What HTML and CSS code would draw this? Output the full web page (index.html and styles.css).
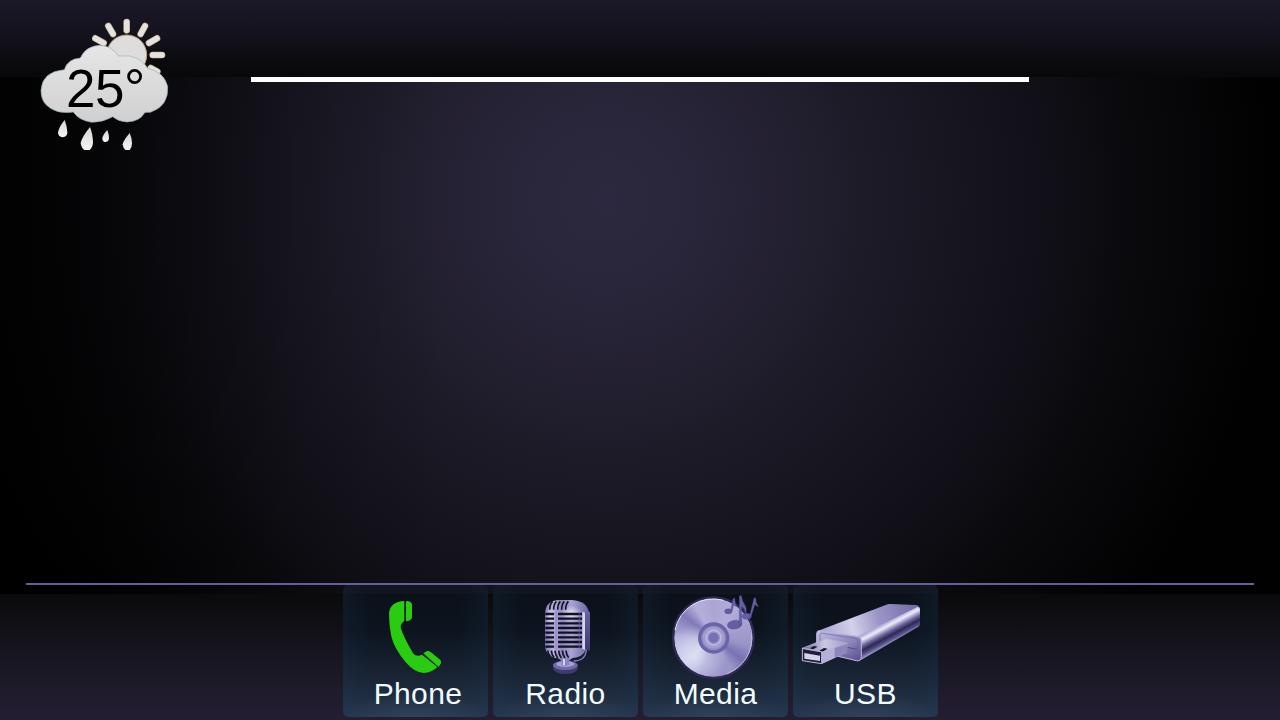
FILE: index.html
```html
<!DOCTYPE html>
<html lang="en">
<head>
<meta charset="utf-8">
<title>Car Console</title>
<link rel="stylesheet" href="styles.css">
</head>
<body>
<div class="console">
  <header class="header"></header>
  <main class="stage">
    <div class="stage-bar"></div>
    <div class="divider"></div>
  </main>
  <footer class="footer">
    <nav class="dock">
      <a class="tile">
        <svg class="tile-icon" viewBox="24 30 435 285">
          <g fill="#29cc10">
            <path d="M208 78V138Q197 145 197 158Q205 185 235 236Q245 246 261 239L307 276Q291 293 266 294Q240 294 212 262Q176 219 168 180Q162 148 162 114Q166 80 208 78Z"/>
            <path d="M213 78Q228 78 231 88V128Q227 138 213 139Z"/>
            <path d="M265 235L276 228Q282 227 288 232L316 255Q319 258 318 265L311 276Z"/>
          </g>
        </svg>
        <span class="tile-label phone-label">Phone</span>
      </a>
      <a class="tile">
        <svg class="tile-icon" viewBox="24 30 435 285">
          <defs>
            <linearGradient id="mic"><stop offset="0" stop-color="#7f79b9"/><stop offset=".2" stop-color="#bdb8e0"/><stop offset=".38" stop-color="#8d87c5"/><stop offset=".6" stop-color="#a8a3d3"/><stop offset="1" stop-color="#6a64a6"/></linearGradient>
            <radialGradient id="micShine"><stop offset="0" stop-color="#fff" stop-opacity=".75"/><stop offset="1" stop-color="#fff" stop-opacity="0"/></radialGradient>
            <linearGradient id="wing" x2="0" y2="1"><stop offset="0" stop-color="#67629b"/><stop offset="1" stop-color="#3e3a71"/></linearGradient>
          </defs>
          <path d="M205 271V283Q211 297 241 297Q272 297 278 283V271Z" fill="#3f3a70"/>
          <ellipse cx="241" cy="271" rx="37" ry="14" fill="#706aab"/>
          <ellipse cx="241" cy="267" rx="27" ry="9" fill="#a7a2d3"/>
          <path d="M218 248H264L252 257V270Q241 276 229 270V257Z" fill="#8b84c2"/>
          <path d="M237 252V271" stroke="#d5d1f0" stroke-width="6"/>
          <path d="M304 222Q304 243 290 252Q278 259 266 258" fill="none" stroke="#8882bd" stroke-width="4"/>
          <path d="M180 116Q182 75 226 75H262Q305 78 312 112L303 222Q295 249 256 250H222Q184 248 180 214Z" fill="url(#mic)"/>
          <ellipse cx="258" cy="117" rx="34" ry="26" fill="url(#micShine)"/>
          <ellipse cx="196" cy="125" rx="15" ry="30" fill="url(#micShine)"/>
          <g stroke="#11101c" stroke-width="7">
            <path d="M181 117H207M181 131H207M181 145H207M181 159H207M181 173H207M181 187H207M181 201H207M181 215H207"/>
            <path d="M219 117H291M219 131H291M219 145H291M219 159H291M219 173H291M219 187H291M219 201H291M219 215H291"/>
          </g>
          <path d="M283 112V220" stroke="#6b65a2" stroke-width="2"/>
          <path d="M194 104Q194 88 203 80M206 104Q206 87 214 79M218 104Q218 87 226 79M230 104Q230 87 238 79M242 104Q242 87 250 79" fill="none" stroke="#171523" stroke-width="5"/>
          <path d="M188 227Q189 238 196 244M199 227Q200 240 207 247M210 227Q211 241 218 249M221 227Q222 241 229 249M232 227Q233 241 240 249M243 227Q244 241 251 248" fill="none" stroke="#171523" stroke-width="5"/>
          <path d="M213 106V224" stroke="#9a94cc" stroke-width="9"/>
          <path d="M292 111L301 113V225L292 221Z" fill="#d7d4ed"/>
          <path d="M300 111H315V227L300 223Z" fill="url(#wing)"/>
        </svg>
        <span class="tile-label">Radio</span>
      </a>
      <a class="tile">
        <svg class="tile-icon" viewBox="24 30 435 285">
          <foreignObject x="117" y="70" width="237" height="237"><div class="disc"></div></foreignObject>
          <circle cx="235" cy="188" r="121" fill="none" stroke="#2d2952" stroke-width="7"/>
          <path d="M120 165A116 116 0 0 1 265 76" fill="none" stroke="#e8e6fa" stroke-width="3"/>
          <path d="M350 175A116 116 0 0 1 275 297" fill="none" stroke="#d3d0ee" stroke-width="2"/>
          <circle cx="236" cy="189" r="42" fill="#8e88c5" stroke="#6a63a8" stroke-width="10"/>
          <circle cx="236" cy="188" r="33" fill="#a29dce"/>
          <circle cx="236" cy="188" r="22" fill="#9994ca" stroke="#bbb7df" stroke-width="5"/>
          <circle cx="236" cy="188" r="15" fill="#7771b3"/>
          <g fill="#655ea5" stroke="#4b447f" stroke-width="1">
            <ellipse cx="299" cy="149" rx="22" ry="13" transform="rotate(-8 299 149)"/>
            <ellipse cx="280" cy="109" rx="11" ry="8"/>
            <ellipse cx="335" cy="124" rx="14" ry="9"/>
            <path d="M313 151L313 62L319 62Q321 77 330 91Q337 101 332 119Q331 103 320 95L320 149Z"/>
            <path d="M286 111L294 71L299 69Q299 80 305 95Q299 93 296 89L291 110Z"/>
            <path d="M343 126L357 69L362 68Q361 82 370 95Q362 93 360 88L348 125Z"/>
          </g>
        </svg>
        <span class="tile-label">Media</span>
      </a>
      <a class="tile">
        <svg class="tile-icon" viewBox="24 30 435 285">
          <defs>
            <linearGradient id="usbTop" x1="110" y1="170" x2="390" y2="95" gradientUnits="userSpaceOnUse"><stop offset="0" stop-color="#a8a2d2"/><stop offset=".32" stop-color="#d3d0e9"/><stop offset=".6" stop-color="#9c96c8"/><stop offset="1" stop-color="#756da9"/></linearGradient>
            <linearGradient id="usbSide" x1="300" y1="143" x2="330" y2="199" gradientUnits="userSpaceOnUse"><stop offset="0" stop-color="#aaa4d3"/><stop offset=".2" stop-color="#eeecfa"/><stop offset=".46" stop-color="#6c659e"/><stop offset=".65" stop-color="#2d2855"/><stop offset=".82" stop-color="#544d86"/><stop offset="1" stop-color="#9d97ca"/></linearGradient>
            <linearGradient id="usbFace" x2="1" y2="1"><stop offset="0" stop-color="#c3bfe3"/><stop offset=".6" stop-color="#8882b9"/><stop offset="1" stop-color="#544c88"/></linearGradient>
            <linearGradient id="plug"><stop offset="0" stop-color="#6d669b"/><stop offset=".5" stop-color="#cbc8e4"/><stop offset="1" stop-color="#a19cca"/></linearGradient>
          </defs>
          <path d="M98 168L304 89Q310 86 318 87L391 90Q402 91 405 101L228 190Z" fill="url(#usbTop)"/>
          <path d="M218 184L398 95Q405 97 405 104V145Q405 153 398 157L232 253Q222 260 216 258Z" fill="url(#usbSide)"/>
          <path d="M103 167L216 184Q229 187 229 199V244Q228 260 214 257L108 232Q95 230 95 218V177Q95 167 103 167Z" fill="url(#usbFace)" stroke="#bbb6de" stroke-width="3"/>
          <path d="M108 174L209 190Q219 192 219 202V241Q217 249 209 248L105 225V180Z" fill="none" stroke="#6e67a0" stroke-width="2"/>
          <path d="M187 217L216 223" stroke="#554e83" stroke-width="3"/>
          <path d="M51 220L124 191L187 205L186 232L111 266L108 231Z" fill="url(#plug)"/>
          <path d="M111 231L186 205V232L111 266Z" fill="#b5b0d7"/>
          <path d="M149 218L186 205V232L149 248Z" fill="#8d87bd"/>
          <path d="M52 220L110 230V266L52 257Z" fill="#211d3b" stroke="#c1bddf" stroke-width="3"/>
          <path d="M58 234L105 242V258L58 251Z" fill="#d5d2eb"/>
          <path d="M74 220L87 213L98 215L84 223ZM103 227L117 219L128 221L113 230Z" fill="#17142c"/>
          <path d="M51 220L124 191L187 205L111 231Z" fill="none" stroke="#b5b0d9" stroke-width="2"/>
        </svg>
        <span class="tile-label">USB</span>
      </a>
    </nav>
  </footer>
  <section class="weather">
    <svg class="weather-icon" viewBox="0 0 450 450">
      <defs>
        <linearGradient id="cloud" x2="0" y2="1"><stop offset="0" stop-color="#e6e6e6"/><stop offset="1" stop-color="#d0d0d0"/></linearGradient>
        <linearGradient id="drop" x2="0" y2="1"><stop offset="0" stop-color="#d6d6d6"/><stop offset="1" stop-color="#f6f6f6"/></linearGradient>
      </defs>
      <path d="M290 36V61M235 48L249 72M345 48L332 72M196 85L221 99M381 85L357 99M368 135H396M362 174L382 185" stroke="#b9a68a" stroke-width="20" stroke-linecap="round"/>
      <path d="M290 36V61M235 48L249 72M345 48L332 72M196 85L221 99M381 85L357 99M368 135H396M362 174L382 185" stroke="#e6e3de" stroke-width="16" stroke-linecap="round"/>
      <circle cx="290" cy="135" r="60" fill="#dfdddb" stroke="#b6a17f" stroke-width="3"/>
      <path d="M103 179Q112 147 151 144Q168 107 211 106Q248 109 265 138Q328 130 353 175Q400 184 413 229Q417 288 361 307Q346 306 344 308Q330 334 291 336Q264 334 248 320Q219 337 185 337Q145 330 130 306Q78 314 48 284Q33 269 33 241Q36 185 103 179Z" fill="url(#cloud)" stroke="#91aeb1" stroke-width="2"/>
      <path d="M265 138Q320 132 346 169" fill="none" stroke="#d3d3d3" stroke-width="2"/>
      <g fill="url(#drop)">
        <path d="M104 330Q87 350 84 367Q84 381 98 382Q112 380 112 367Q111 348 104 330Z"/>
        <path d="M180 351Q155 382 152 399Q154 414 163 420H179Q188 413 189 397Q188 370 180 351Z"/>
        <path d="M232 360Q218 374 217 386Q218 396 227 396Q237 394 237 384Q237 372 232 360Z"/>
        <path d="M299 369Q280 391 278 403Q279 415 287 420H299Q306 413 306 400Q306 384 299 369Z"/>
      </g>
    </svg>
    <span class="temperature">25°</span>
  </section>
</div>
</body>
</html>
```
FILE: styles.css
```css
* { box-sizing: border-box; }
body { margin: 0; overflow: hidden; background: #000; font-family: "Liberation Sans", Arial, sans-serif; }
.console {
  position: relative;
  display: flex;
  flex-direction: column;
  width: 1280px;
  height: 720px;
  background:
    linear-gradient(90deg, rgba(0, 0, 0, .7), rgba(0, 0, 0, .5) 110px, rgba(0, 0, 0, .12) 300px, transparent 450px),
    radial-gradient(ellipse 670px 660px at 605px 200px, #2c283f 0%, #282438 18%, #201d2c 34%, #191722 48%, #111018 66%, #0b0b0f 76%, #060608 88%, #010101 100%);
}
.header { height: 77px; background: linear-gradient(#1b1828, #14121d 45%, #0b0b0e 80%, #08080a); }
.stage { display: flex; flex: 1; flex-direction: column; align-items: center; justify-content: space-between; }
.stage-bar { width: 778px; height: 5px; background: #fff; }
.divider { width: 1228px; height: 2px; margin-bottom: 9px; background: #665d9b; }
.footer { display: flex; justify-content: center; height: 126px; background: linear-gradient(#0a0a0c, #14121b 35%, #1d1a28 70%, #231e32); }
.dock { display: flex; gap: 5px; height: 132px; margin-top: -9px; }
.tile {
  display: flex;
  flex-direction: column;
  align-items: center;
  width: 145px;
  height: 132px;
  border-radius: 5px;
  background:
    radial-gradient(ellipse 75px 24px at 50% 100%, rgba(60, 75, 98, .55), transparent),
    linear-gradient(rgba(27, 26, 38, .5) 9px, transparent 9px),
    linear-gradient(90deg, rgba(27, 62, 91, .18), transparent 20%, transparent 80%, rgba(27, 62, 91, .18)),
    linear-gradient(#0a1018, #0d141e 35%, #1a2536 72%, #25364d);
}
.tile-icon { display: block; flex: none; width: 145px; height: 95px; }
.tile-label { height: 34px; margin-top: -3px; padding-left: 1px; color: #f0fcff; font-size: 30px; line-height: 33px; letter-spacing: .4px; }
.phone-label { padding-left: 6px; }
.disc {
  width: 237px;
  height: 237px;
  border-radius: 50%;
  background:
    radial-gradient(circle at 27% 74%, rgba(226, 232, 248, .8), transparent 38%),
    conic-gradient(#aaa5d3, #b1acd9 35deg, #a39ece 75deg, #9b96c9 100deg, #7872b1 127deg, #9c97ca 150deg, #9792c9 200deg, #c5c6e6 230deg, #b2afda 270deg, #7f79b7 307deg, #b4afda 330deg, #aaa5d3);
}
.weather { position: absolute; top: 10px; left: 30px; width: 150px; height: 150px; }
.weather-icon { display: block; width: 150px; height: 150px; }
.temperature { position: absolute; top: 49px; left: 36px; color: #000; font-size: 53px; line-height: 60px; letter-spacing: -.5px; white-space: nowrap; }
```
